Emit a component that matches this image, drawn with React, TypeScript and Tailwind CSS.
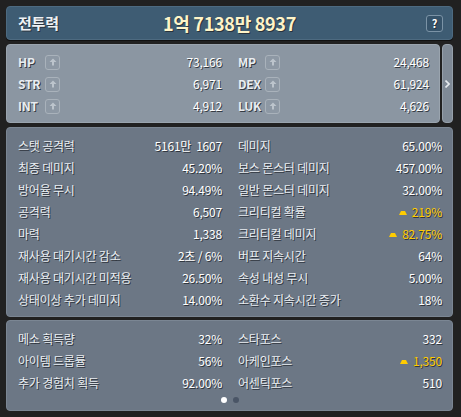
import React from "react";

type Stat = { label: string; value: string; up?: boolean };

const baseStats: [Stat, Stat][] = [
  [{ label: "HP", value: "73,166" }, { label: "MP", value: "24,468" }],
  [{ label: "STR", value: "6,971" }, { label: "DEX", value: "61,924" }],
  [{ label: "INT", value: "4,912" }, { label: "LUK", value: "4,626" }],
];

const combatStats: [Stat, Stat][] = [
  [{ label: "스탯 공격력", value: "5161만  1607" }, { label: "데미지", value: "65.00%" }],
  [{ label: "최종 데미지", value: "45.20%" }, { label: "보스 몬스터 데미지", value: "457.00%" }],
  [{ label: "방어율 무시", value: "94.49%" }, { label: "일반 몬스터 데미지", value: "32.00%" }],
  [{ label: "공격력", value: "6,507" }, { label: "크리티컬 확률", value: "219%", up: true }],
  [{ label: "마력", value: "1,338" }, { label: "크리티컬 데미지", value: "82.75%", up: true }],
  [{ label: "재사용 대기시간 감소", value: "2초 / 6%" }, { label: "버프 지속시간", value: "64%" }],
  [{ label: "재사용 대기시간 미적용", value: "26.50%" }, { label: "속성 내성 무시", value: "5.00%" }],
  [{ label: "상태이상 추가 데미지", value: "14.00%" }, { label: "소환수 지속시간 증가", value: "18%" }],
];

const etcStats: [Stat, Stat][] = [
  [{ label: "메소 획득량", value: "32%" }, { label: "스타포스", value: "332" }],
  [{ label: "아이템 드롭률", value: "56%" }, { label: "아케인포스", value: "1,350", up: true }],
  [{ label: "추가 경험치 획득", value: "92.00%" }, { label: "어센틱포스", value: "510" }],
];

const shadow = "[text-shadow:1px_1px_0_rgba(40,46,54,0.9)]";

function PlusButton() {
  return (
    <div className="w-[15px] h-[15px] rounded-[3px] border border-[#a9b2bb] bg-[#8d98a4] flex items-center justify-center">
      <svg width="8" height="8" viewBox="0 0 8 8">
        <path d="M4 0.5 L7.5 4 L5 4 L5 7.5 L3 7.5 L3 4 L0.5 4 Z" fill="#bcc4cc" />
      </svg>
    </div>
  );
}

function Value({ stat }: { stat: Stat }) {
  if (stat.up) {
    return (
      <span className="flex items-center gap-[5px] text-[#ffcc00]">
        <svg width="8" height="5" viewBox="0 0 8 5">
          <path d="M0 5 L2 1 L6 1 L8 5 Z" fill="#ffcc00" />
        </svg>
        {stat.value}
      </span>
    );
  }
  return <span className="text-white whitespace-pre">{stat.value}</span>;
}

function Row({ stat }: { stat: Stat }) {
  return (
    <div className="h-[22px] flex items-center justify-between">
      <span className="text-[#e9edf1]">{stat.label}</span>
      <Value stat={stat} />
    </div>
  );
}

function BaseRow({ stat }: { stat: Stat }) {
  return (
    <div className="h-[22px] flex items-center">
      <span className="w-[27px] font-bold text-[#e9edf1]">{stat.label}</span>
      <PlusButton />
      <span className="ml-auto text-white">{stat.value}</span>
    </div>
  );
}

export default function App() {
  return (
    <div
      className={`w-[461px] h-[417px] bg-[#212121] pl-[6px] pr-[8px] pt-[6px] text-[12px] tracking-[-0.2px] ${shadow}`}
      style={{ fontFamily: '"Noto Sans CJK KR", "Noto Sans", sans-serif' }}
    >
      {/* Header */}
      <div className="relative h-[34px] rounded-[4px] bg-[#3e5c73] border border-[#4d6a80] shadow-[0_1px_0_#111] flex items-center pl-[11px]">
        <span className="text-[15px] font-bold text-[#eef2f5]">전투력</span>
        <span className="absolute left-1/2 -translate-x-1/2 text-[18px] font-bold text-[#fff4c8] tracking-[-0.3px]">
          1억 7138만 8937
        </span>
        <div className="absolute right-[9px] top-[8px] w-[17px] h-[17px] rounded-[3px] border border-[#7b93a6] bg-[#36536a] flex items-center justify-center text-[11px] font-bold text-white">
          ?
        </div>
      </div>

      {/* Base stats */}
      <div className="mt-[4px] flex gap-[2px] h-[79px]">
        <div className="flex-1 rounded-[4px] bg-[#8b96a2] border border-[#9aa4ae] pl-[11px] pr-[10px] pt-[6px]">
          {baseStats.map(([l, r], i) => (
            <div key={i} className="grid grid-cols-[204px_1fr] gap-x-[16px]">
              <BaseRow stat={l} />
              <BaseRow stat={r} />
            </div>
          ))}
        </div>
        <div className="w-[11px] rounded-[4px] bg-[#7f8a96] border border-[#96a0aa] flex items-center justify-center">
          <svg width="5" height="8" viewBox="0 0 5 8">
            <path d="M0.5 0.5 L4 4 L0.5 7.5" stroke="#e6ebef" strokeWidth="1.6" fill="none" />
          </svg>
        </div>
      </div>

      {/* Combat stats */}
      <div className="mt-[4px] h-[190px] rounded-[4px] bg-[#6c7785] border border-[#7b8693] pl-[11px] pr-[10px] pt-[7px]">
        {combatStats.map(([l, r], i) => (
          <div key={i} className="grid grid-cols-[204px_1fr] gap-x-[16px]">
            <Row stat={l} />
            <Row stat={r} />
          </div>
        ))}
      </div>

      {/* Etc stats */}
      <div className="relative mt-[3px] h-[91px] rounded-[4px] bg-[#6c7785] border border-[#7b8693] pl-[11px] pr-[10px] pt-[7px]">
        {etcStats.map(([l, r], i) => (
          <div key={i} className="grid grid-cols-[204px_1fr] gap-x-[16px]">
            <Row stat={l} />
            <Row stat={r} />
          </div>
        ))}
        <div className="absolute left-1/2 -translate-x-1/2 bottom-[7px] flex gap-[6px]">
          <div className="w-[6px] h-[6px] rounded-full bg-white" />
          <div className="w-[6px] h-[6px] rounded-full bg-[#4a5566]" />
        </div>
      </div>
    </div>
  );
}
